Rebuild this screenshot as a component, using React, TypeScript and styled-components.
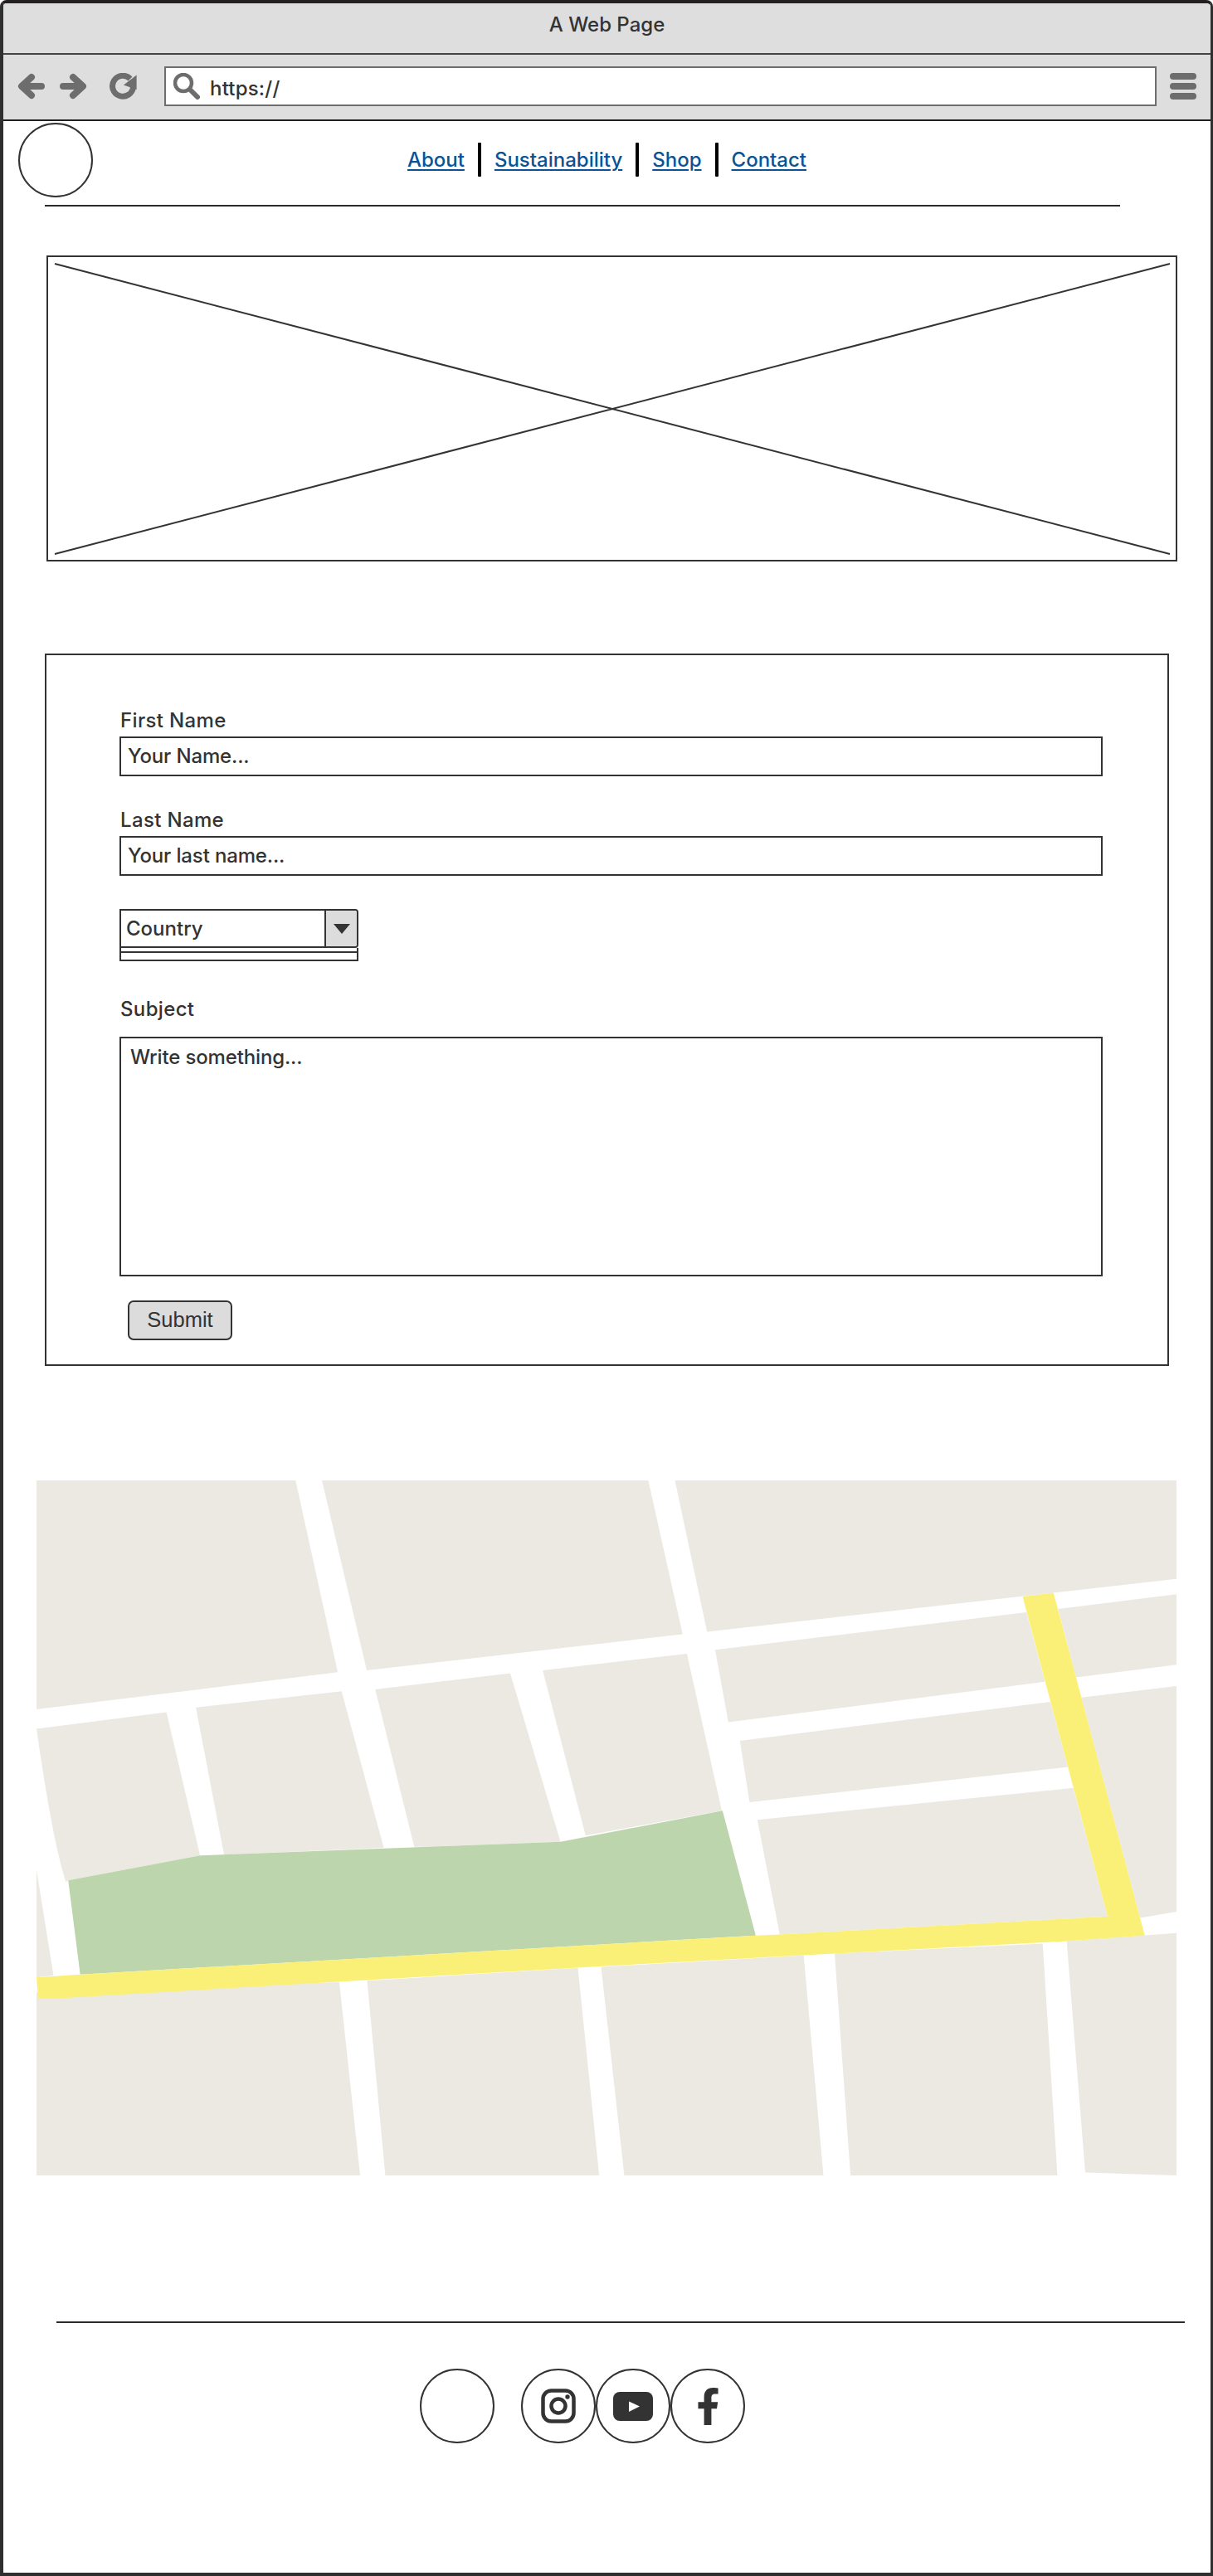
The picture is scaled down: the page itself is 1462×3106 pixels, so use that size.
import React from "react";
import styled, { createGlobalStyle } from "styled-components";
import { FaFacebookF } from "react-icons/fa";

const Global = createGlobalStyle`
  html, body { margin: 0; padding: 0; background: #fff; }
  * { box-sizing: border-box; }
`;

const font = `"Inter", "Noto Sans", sans-serif`;
const ink = "#333333";
const chrome = "#dedede";
const iconGrey = "#6d6d6d";

const Frame = styled.div`
  width: 1462px;
  height: 3106px;
  border: solid #2f2f2f;
  border-width: 4px 3px 4px 4px;
  border-top-color: #231f20;
  border-radius: 8px 8px 0 0;
  font-family: ${font};
  font-size: 24px;
  font-weight: 500;
  color: ${ink};
  overflow: hidden;
`;
const TitleBar = styled.div`
  height: 62px;
  background: ${chrome};
  border-bottom: 2px solid #444;
  padding-top: 8px;
  text-align: center;
  line-height: 36px;
`;
const Toolbar = styled.div`
  height: 80px;
  background: ${chrome};
  border-bottom: 2px solid #231f20;
  display: flex;
  align-items: center;
  padding: 0 16px 2px 17px;
`;
const NavIcons = styled.div`
  display: flex;
  align-items: center;
  width: 177px;
  gap: 18px;
  svg:last-child { margin-left: 9px; }
`;
const UrlBox = styled.div`
  width: 1196px;
  height: 48px;
  background: #fff;
  border: 2px solid ${iconGrey};
  display: flex;
  align-items: center;
  padding-left: 9px;
  gap: 12px;
`;
const UrlText = styled.span`
  line-height: 44px;
  padding-top: 6px;
  letter-spacing: 0.2px;
`;
const Menu = styled.div`
  margin-left: 16px;
  width: 32px;
  display: flex;
  flex-direction: column;
  gap: 4px;
`;
const MenuBar = styled.span`
  height: 8px;
  border-radius: 4px;
  background: ${iconGrey};
`;
const Header = styled.header`
  display: grid;
  grid-template-columns: 1fr auto 1fr;
  align-items: center;
  padding: 2px 18px 0;
`;
const Circle = styled.div`
  width: 90px;
  height: 90px;
  border-radius: 50%;
  border: 2px solid ${ink};
  background: #fff;
  display: flex;
  align-items: center;
  justify-content: center;
`;
const Nav = styled.nav`
  display: flex;
  align-items: center;
  gap: 16px;
  margin-top: -2px;
`;
const NavLink = styled.a`
  color: #0b5394;
  text-decoration: underline;
  text-decoration-thickness: 2px;
  text-underline-offset: 3px;
`;
const NavSep = styled.span`
  width: 4px;
  height: 41px;
  background: #000;
  border-radius: 1px;
`;
const Rule = styled.div<{ $left: number; $width: number; $top: number }>`
  height: 2px;
  background: #2a2a2a;
  margin: ${(p) => p.$top}px 0 0 ${(p) => p.$left}px;
  width: ${(p) => p.$width}px;
`;
const Hero = styled.div`
  width: 1363px;
  height: 369px;
  margin: 59px 0 0 52px;
  border: 2px solid ${ink};
  svg { display: block; width: 100%; height: 100%; }
`;
const Form = styled.form`
  width: 1355px;
  height: 859px;
  margin: 111px 0 0 50px;
  border: 2px solid ${ink};
  padding: 63px 0 0 88px;
`;
const Label = styled.label<{ $mb?: number; $mt?: number }>`
  display: block;
  line-height: 32px;
  margin: ${(p) => p.$mt ?? 0}px 0 ${(p) => p.$mb ?? 3}px 1px;
  letter-spacing: 0.35px;
`;
const TextBox = styled.div<{ $h: number }>`
  width: 1185px;
  height: ${(p) => p.$h}px;
  border: 2px solid ${ink};
  padding-left: 8px;
  line-height: 44px;
  letter-spacing: -0.15px;
`;
const TextArea = styled(TextBox)`
  padding-left: 11px;
  line-height: 46px;
`;
const SelectWrap = styled.div`
  margin-top: 40px;
  width: 288px;
`;
const SelectHead = styled.div`
  display: flex;
  height: 47px;
  border: 2px solid ${ink};
  border-radius: 0 4px 4px 0;
`;
const SelectValue = styled.div`
  flex: 1;
  padding-left: 6px;
  line-height: 43px;
`;
const SelectBtn = styled.div`
  width: 39px;
  background: #dcdcdc;
  border-left: 2px solid ${ink};
  border-radius: 0 3px 3px 0;
  display: flex;
  align-items: center;
  justify-content: center;
`;
const Caret = styled.span`
  width: 0;
  height: 0;
  border-left: 10px solid transparent;
  border-right: 10px solid transparent;
  border-top: 12px solid ${ink};
`;
const SelectList = styled.div`
  height: 16px;
  border: 2px solid ${ink};
  border-top: 0;
  padding-top: 4px;
`;
const ListLine = styled.div`
  height: 2px;
  background: ${ink};
`;
const Submit = styled.button`
  display: block;
  width: 126px;
  height: 48px;
  margin: 29px 0 0 10px;
  background: #dcdcdc;
  border: 2px solid ${ink};
  border-radius: 7px;
  font-family: "Liberation Sans", Arial, sans-serif;
  font-size: 25.5px;
  color: ${ink};
  padding: 0 0 2px;
`;
const MapBox = styled.svg`
  display: block;
  width: 1374px;
  height: 838px;
  margin: 138px 0 0 40px;
`;
const Footer = styled.footer`
  display: flex;
  margin-top: 55px;
  padding-left: 502px;
`;
const Socials = styled.div`
  display: flex;
  margin-left: 32px;
`;

const Back = ({ flip }: { flip?: boolean }) => (
  <svg width="33" height="32" viewBox="0 0 33 32" fill="none" stroke={iconGrey} strokeWidth="8" strokeLinecap="round" strokeLinejoin="round" style={flip ? { transform: "scaleX(-1)" } : undefined}>
    <path d="M29 16H6M17 5 5 16l12 11" />
  </svg>
);
const Reload = () => (
  <svg width="33" height="32" viewBox="0 0 33 32" fill="none">
    <path d="M25 7A12.5 12.5 0 1 0 28.5 17" stroke={iconGrey} strokeWidth="7" />
    <path d="M32.6 2.5V20L17 14.5Z" fill={iconGrey} />
  </svg>
);
const Search = () => (
  <svg width="32" height="32" viewBox="0 0 32 32" fill="none" stroke={iconGrey} strokeLinecap="round">
    <circle cx="12" cy="12" r="10" strokeWidth="4.5" />
    <path d="M20 20 29 29" strokeWidth="6" />
  </svg>
);
const Instagram = () => (
  <svg width="42" height="42" viewBox="0 0 42 42" fill="none" stroke={ink}>
    <rect x="2.5" y="2.5" width="37" height="37" rx="10" strokeWidth="4.5" />
    <circle cx="21" cy="21" r="8.5" strokeWidth="4.5" />
    <circle cx="32" cy="10" r="2.7" fill={ink} stroke="none" />
  </svg>
);
const Youtube = () => (
  <svg width="48" height="35" viewBox="0 0 48 35">
    <rect width="48" height="35" rx="8" fill={ink} />
    <path d="M19 11.5 32 17.5 19 24Z" fill="#fff" />
  </svg>
);

const blocks: string[] = [
  "94,44 764,44 873,447 94,525",
  "832,44 1676,44 1765,367 948,443",
  "1745,44 3042,44 3042,251 1828,362",
  "506,521 883,487 992,816 579,830",
  "970,483 1319,449 1449,803 1071,814",
  "1403,443 1776,408 1866,738 1514,790",
  "94,862 138,1084 94,1088",
  "94,1120 877,1098 931,1504 94,1504",
  "949,1095 1494,1068 1549,1504 996,1504",
  "1554,1066 2078,1042 2129,1504 1614,1504",
  "2158,1038 2696,1017 2734,1504 2199,1504",
  "2758,1012 3042,995 3042,1504 2806,1498",
  "2736,314 3042,283 3042,431 2782,458",
  "2796,500 3042,476 3042,950 2948,963",
  "1849,400 2654,321 2702,467 1883,552",
  "1913,591 2716,509 2761,646 1938,720",
  "1958,757 2775,690 2864,960 2016,998",
];

const App: React.FC = () => (
  <>
    <Global />
    <Frame>
      <TitleBar>A Web Page</TitleBar>
      <Toolbar>
        <NavIcons>
          <Back />
          <Back flip />
          <Reload />
        </NavIcons>
        <UrlBox>
          <Search />
          <UrlText>https://</UrlText>
        </UrlBox>
        <Menu>
          <MenuBar />
          <MenuBar />
          <MenuBar />
        </Menu>
      </Toolbar>
      <Header>
        <Circle />
        <Nav>
          <NavLink href="#">About</NavLink>
          <NavSep />
          <NavLink href="#">Sustainability</NavLink>
          <NavSep />
          <NavLink href="#">Shop</NavLink>
          <NavSep />
          <NavLink href="#">Contact</NavLink>
        </Nav>
        <span />
      </Header>
      <Rule $left={50} $width={1296} $top={9} />
      <Hero>
        <svg viewBox="0 0 1359 365" preserveAspectRatio="none" fill="none" stroke={ink} strokeWidth="2">
          <path d="M8 8 1352 358M1352 8 8 358" />
        </svg>
      </Hero>
      <Form>
        <Label>First Name</Label>
        <TextBox $h={48}>Your Name...</TextBox>
        <Label $mt={37}>Last Name</Label>
        <TextBox $h={48}>Your last name...</TextBox>
        <SelectWrap>
          <SelectHead>
            <SelectValue>Country</SelectValue>
            <SelectBtn>
              <Caret />
            </SelectBtn>
          </SelectHead>
          <SelectList>
            <ListLine />
          </SelectList>
        </SelectWrap>
        <Label $mt={42} $mb={17}>Subject</Label>
        <TextArea $h={289}>Write something...</TextArea>
        <Submit type="button">Submit</Submit>
      </Form>
      <MapBox viewBox="94 44 2948 1460" preserveAspectRatio="none">
        <path d="M94 566 430 531 517 832 176 884 170 888Q135 800 94 566Z" fill="#ebe9e2" />
        {blocks.map((points) => (
          <polygon key={points} points={points} fill="#ebe9e2" />
        ))}
        <polygon points="176,884 517,832 1449,803 1868,738 1954,1000 207,1082" fill="#bdd5ac" />
        <polygon
          points="94,1088 207,1082 1954,1000 2015,998 2864,960 2644,288 2724,280 2960,1000 2758,1012 2158,1038 1568,1064 150,1132 98,1132"
          fill="#faf078"
        />
      </MapBox>
      <Rule $left={64} $width={1360} $top={176} />
      <Footer>
        <Circle />
        <Socials>
          <Circle><Instagram /></Circle>
          <Circle><Youtube /></Circle>
          <Circle><FaFacebookF size={45} color={ink} /></Circle>
        </Socials>
      </Footer>
    </Frame>
  </>
);

export default App;
